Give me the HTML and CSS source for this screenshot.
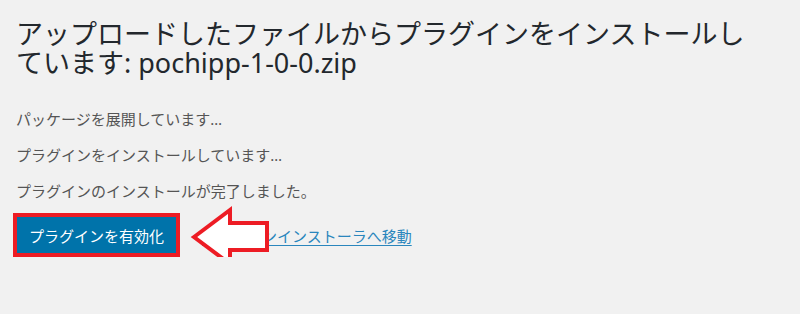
FILE: index.html
```html
<!DOCTYPE html>
<html lang="ja">
<head>
<meta charset="utf-8">
<title>プラグインのインストール</title>
<link rel="stylesheet" href="styles.css">
</head>
<body>
<div class="wrap">
  <h1 class="title">アップロードしたファイルからプラグインをインストールしています: pochipp-1-0-0.zip</h1>
  <p class="msg">パッケージを展開しています…</p>
  <p class="msg">プラグインをインストールしています…</p>
  <p class="msg">プラグインのインストールが完了しました。</p>
  <div class="actions">
    <span class="highlight"><a class="button" href="#">プラグインを有効化</a></span>
    <a class="link" href="#">プラグインインストーラへ移動</a>
    <svg class="arrow" width="84" height="66" viewBox="0 0 84 66" aria-hidden="true">
      <polygon points="6,33 42,6 42,19 79,19 79,46 42,46 42,60" fill="#ffffff" stroke="#ed1c24" stroke-width="4" stroke-linejoin="miter"/>
    </svg>
  </div>
</div>
</body>
</html>
```

FILE: styles.css
```css
html, body {
  margin: 0;
  padding: 0;
  background: #f1f1f1;
}
body {
  font-family: "Noto Sans", "Noto Sans CJK JP", sans-serif;
  color: #50575e;
}
.wrap {
  padding: 19px 40px 0 16px;
}
.title {
  margin: 0;
  font-size: 27px;
  line-height: 29px;
  font-weight: 400;
  color: #23282d;
}
.msg {
  margin: 0;
  font-size: 15px;
  line-height: 20px;
  color: #555555;
}
.title + .msg {
  margin-top: 32px;
}
.msg + .msg {
  margin-top: 16px;
}
.actions {
  position: relative;
  display: flex;
  align-items: center;
  gap: 22px;
  margin-top: 12px;
  margin-left: -3px;
}
.highlight {
  display: inline-flex;
  border: 4px solid #ed1c24;
}
.button {
  display: inline-flex;
  align-items: center;
  justify-content: center;
  width: 159px;
  height: 36px;
  background: #0073aa;
  color: #ffffff;
  font-size: 15px;
  text-decoration: none;
}
.link {
  color: #2a86bd;
  font-size: 15px;
  text-decoration: underline;
  text-underline-offset: 3px;
}
.arrow {
  position: absolute;
  left: 175px;
  top: -9px;
}
```
